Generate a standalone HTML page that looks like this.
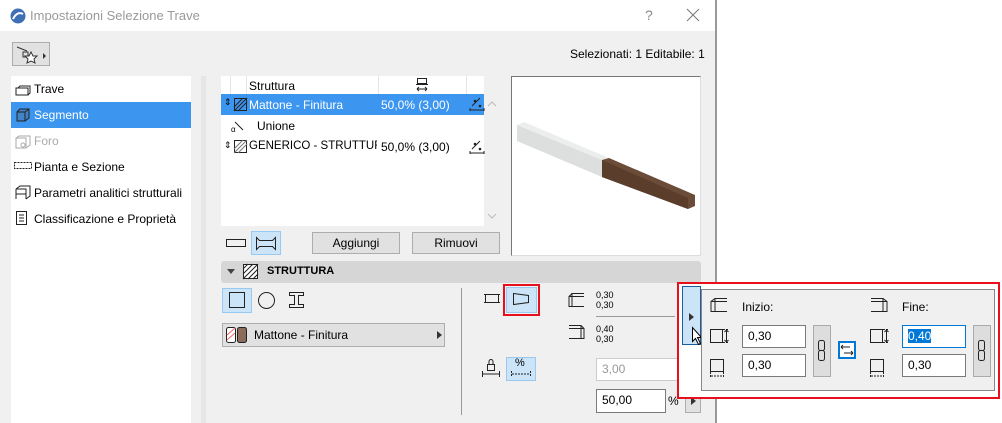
<!DOCTYPE html>
<html><head><meta charset="utf-8"><style>
*{box-sizing:border-box;margin:0;padding:0}
body{width:1002px;height:423px;background:#fff;font-family:"Liberation Sans",sans-serif;font-size:12px;color:#000;position:relative;overflow:hidden}
.a{position:absolute}
.dlg{left:0;top:0;width:717px;height:423px;background:#f0f0f0;border-right:2px solid #999}
.title{left:0;top:0;width:715px;height:31px;background:#fff}
.it{position:absolute;left:34px;font-size:12px}
.btn{position:absolute;background:#e1e1e1;border:1px solid #adadad;text-align:center;line-height:20px}
.inp{position:absolute;background:#fff;border:1px solid #7a7a7a;padding-left:5px;line-height:20px;font-size:12px}
.sel{background:#cce4f7;border:1px solid #99c9ef}
svg{position:absolute;overflow:visible}
</style></head><body>
<div class="a dlg"></div>
<div class="a title"></div>
<svg style="left:10px;top:8px" width="16" height="16"><circle cx="8" cy="8" r="7.5" fill="#3f6fb5"/><path d="M3 11 Q7 3 13 6" stroke="#fff" stroke-width="2" fill="none"/></svg>
<div class="a" style="left:30px;top:8px;color:#999;font-size:13px">Impostazioni Selezione Trave</div>
<div class="a" style="left:645px;top:7px;color:#888;font-size:14px">?</div>
<svg style="left:687px;top:9px" width="12" height="12"><path d="M0 0L12 12M12 0L0 12" stroke="#777" stroke-width="1"/></svg>

<div class="btn" style="left:12px;top:42px;width:38px;height:24px"></div>
<svg style="left:17px;top:46px" width="30" height="18"><path d="M0 1L10 5M6 6h5v5h-5z" stroke="#333" fill="none"/><path d="M14 6l2 4h4l-3 3 1 4-4-2-4 2 1-4-3-3h4z" stroke="#333" fill="#fff"/><path d="M26 7l3 3-3 3z" fill="#333"/></svg>
<div class="a" style="left:570px;top:47px;font-size:12px">Selezionati: 1 Editabile: 1</div>

<!-- left panel -->
<div class="a" style="left:11px;top:76px;width:180px;height:347px;background:#fff"></div>
<div class="a" style="left:11px;top:102px;width:180px;height:26px;background:#3c96f0"></div>
<div class="a" style="left:201px;top:76px;width:5px;height:347px;background:#e6e6e6"></div>
<svg style="left:15px;top:84px" width="17" height="13"><path d="M1 4h12v7H1zM3 4l2-2h10v7l-2 2" stroke="#222" fill="none"/></svg>
<div class="it" style="top:82px">Trave</div>
<svg style="left:16px;top:108px" width="14" height="14"><path d="M1 4h8v9H1zM1 4l3-3h9v9l-4 3M9 4l4-3" stroke="#222" fill="#556" fill-opacity=".3"/></svg>
<div class="it" style="top:108px;color:#fff">Segmento</div>
<svg style="left:15px;top:135px" width="17" height="14"><path d="M1 3h10v10H1zM1 3l3-2h11v9l-4 3" stroke="#aaa" fill="none"/><circle cx="8" cy="10" r="2" stroke="#aaa" fill="none"/></svg>
<div class="it" style="top:134px;color:#aaa">Foro</div>
<svg style="left:14px;top:162px" width="18" height="8"><rect x="0.5" y="0.5" width="17" height="6" stroke="#222" fill="none" stroke-dasharray="2 1"/></svg>
<div class="it" style="top:160px">Pianta e Sezione</div>
<svg style="left:15px;top:185px" width="16" height="15"><path d="M1 4h10v10M1 4v10M1 4l4-3h10v10l-4 3M1 9h10" stroke="#222" fill="none"/></svg>
<div class="it" style="top:186px">Parametri analitici strutturali</div>
<svg style="left:16px;top:211px" width="12" height="15"><path d="M.5 .5h10v13H.5zM3 4h5M3 7h5M3 10h5" stroke="#222" fill="none"/></svg>
<div class="it" style="top:212px">Classificazione e Proprietà</div>

<!-- table -->
<div class="a" style="left:221px;top:76px;width:263px;height:150px;background:#fff"></div>
<div class="a" style="left:230px;top:76px;width:1px;height:18px;background:#e5e5e5"></div>
<div class="a" style="left:246px;top:76px;width:1px;height:18px;background:#e5e5e5"></div>
<div class="a" style="left:378px;top:76px;width:1px;height:18px;background:#e5e5e5"></div>
<div class="a" style="left:466px;top:76px;width:1px;height:18px;background:#e5e5e5"></div>
<div class="a" style="left:249px;top:79px">Struttura</div>
<svg style="left:416px;top:78px" width="12" height="14"><path d="M1.5 .5h9v5h-9zM0 6.5h12M1 11h10M1 11l2-2M1 11l2 2M11 11l-2-2M11 11l-2 2" stroke="#222" fill="none"/></svg>
<div class="a" style="left:221px;top:94px;width:263px;height:21px;background:#3c96f0"></div>
<div class="a" style="left:224px;top:97px;font-size:9px">⇕</div>
<svg style="left:234px;top:98px" width="13" height="13"><rect x=".5" y=".5" width="12" height="12" stroke="#222" fill="none"/><path d="M0 9l9-9M0 13l13-13M4 13l9-9" stroke="#222"/></svg>
<div class="a" style="left:249px;top:98px;color:#fff">Mattone - Finitura</div>
<div class="a" style="left:381px;top:98px;color:#fff">50,0% (3,00)</div>
<svg style="left:470px;top:97px" width="14" height="14"><path d="M2 9l8-8M0 13h14M0 11v3M14 11v3" stroke="#222"/><circle cx="5" cy="4" r="1.3" fill="#222"/><circle cx="10" cy="9" r="1.3" fill="#222"/></svg>
<svg style="left:231px;top:122px" width="12" height="10"><path d="M4 0l8 8" stroke="#222"/><text x="0" y="10" font-size="8" font-family="Liberation Sans">α</text></svg>
<div class="a" style="left:257px;top:119px">Unione</div>
<div class="a" style="left:224px;top:140px;font-size:9px">⇕</div>
<svg style="left:234px;top:140px" width="13" height="13"><rect x=".5" y=".5" width="12" height="12" stroke="#222" fill="none"/><path d="M0 9l9-9M0 13l13-13M4 13l9-9" stroke="#777"/></svg>
<div class="a" style="left:249px;top:140px;width:128px;white-space:nowrap;overflow:hidden;font-size:11.5px">GENERICO - STRUTTUR...</div>
<div class="a" style="left:381px;top:140px">50,0% (3,00)</div>
<svg style="left:470px;top:140px" width="14" height="14"><path d="M2 9l8-8M0 13h14M0 11v3M14 11v3" stroke="#222"/><circle cx="5" cy="4" r="1.3" fill="#222"/><circle cx="10" cy="9" r="1.3" fill="#222"/></svg>
<svg style="left:488px;top:101px" width="8" height="120"><path d="M0 5l4-4 4 4M0 113l4 4 4-4" stroke="#bbb" fill="none"/></svg>

<!-- preview -->
<div class="a" style="left:511px;top:76px;width:190px;height:180px;background:#fff;border:1px solid #ddd;border-top-color:#777;border-left-color:#777"></div>
<svg style="left:516px;top:120px" width="185" height="95"><polygon points="1,5 8,2 93,38 86,40" fill="#eceeee"/><polygon points="1,5 86,40 86,57 1,21" fill="#dcdfde"/><polygon points="86,40 93,38 179,75 179,86 172,89 86,57" fill="#6b4c38"/><polygon points="86,40 172,78 172,89 86,57" fill="#5a3d2b"/></svg>

<!-- buttons row -->
<svg style="left:226px;top:239px" width="20" height="9"><rect x=".5" y=".5" width="19" height="7" stroke="#222" fill="none"/></svg>
<div class="a sel" style="left:251px;top:231px;width:30px;height:24px"></div>
<svg style="left:256px;top:237px" width="20" height="13"><path d="M.5 .5l3 3h13l3-3v12l-3-3h-13l-3 3z" stroke="#222" fill="none"/></svg>
<div class="btn" style="left:312px;top:232px;width:88px;height:22px">Aggiungi</div>
<div class="btn" style="left:412px;top:232px;width:88px;height:22px">Rimuovi</div>

<!-- STRUTTURA -->
<div class="a" style="left:221px;top:261px;width:480px;height:22px;background:#d6d6d6;border-radius:3px"></div>
<svg style="left:227px;top:269px" width="8" height="5"><path d="M0 0h8l-4 5z" fill="#444"/></svg>
<svg style="left:243px;top:264px" width="15" height="15"><rect x=".5" y=".5" width="14" height="14" stroke="#222" fill="#fff"/><path d="M0 10l10-10M0 15l15-15M5 15l10-10M0 5l5-5M10 15l5-5" stroke="#222"/></svg>
<div class="a" style="left:267px;top:265px;font-weight:bold;font-size:11px">STRUTTURA</div>

<div class="a sel" style="left:222px;top:288px;width:30px;height:25px"></div>
<svg style="left:229px;top:292px" width="16" height="16"><rect x=".5" y=".5" width="15" height="15" stroke="#222" fill="none"/></svg>
<svg style="left:258px;top:292px" width="17" height="17"><circle cx="8.5" cy="8.5" r="8" stroke="#222" fill="none"/></svg>
<svg style="left:289px;top:292px" width="15" height="16"><path d="M.5 .5h14v3h-5v9h5v3h-14v-3h5v-9h-5z" stroke="#222" fill="none"/></svg>
<div class="btn" style="left:222px;top:323px;width:223px;height:24px;text-align:left;padding-left:31px;line-height:22px">Mattone - Finitura</div>
<svg style="left:226px;top:327px" width="22" height="16"><rect x=".5" y=".5" width="9" height="15" stroke="#222" fill="#fff" rx="2"/><path d="M1 8l8-7M1 13l8-7" stroke="#e66"/><rect x="11.5" y=".5" width="9" height="15" stroke="#222" fill="#8b6b5a" rx="2"/></svg>
<svg style="left:437px;top:331px" width="5" height="8"><path d="M0 0l5 4-5 4z" fill="#333"/></svg>
<div class="a" style="left:461px;top:288px;width:1px;height:127px;background:#999"></div>

<svg style="left:484px;top:294px" width="16" height="10"><rect x="1.5" y=".5" width="13" height="8" stroke="#222" fill="none"/><path d="M0 .5h1M0 8.5h1M15 .5h1M15 8.5h1" stroke="#222"/></svg>
<div class="a" style="left:503px;top:284px;width:37px;height:32px;border:2px solid #e8101c"></div>
<div class="a sel" style="left:506px;top:287px;width:31px;height:26px"></div>
<svg style="left:513px;top:293px" width="17" height="12"><path d="M.5 .5l15 2v7l-15 2z" stroke="#222" fill="none"/><path d="M0 .5h1M0 11.5h1" stroke="#222"/></svg>

<svg style="left:568px;top:293px" width="17" height="15"><path d="M16 .5h-12l-3 3v10h15M1 3.5h15M4 .5v13" stroke="#222" fill="none"/></svg>
<div class="a" style="left:596px;top:290px;font-size:9px;line-height:10px">0,30<br>0,30</div>
<div class="a" style="left:596px;top:316px;width:79px;height:1px;background:#999"></div>
<svg style="left:568px;top:325px" width="17" height="15"><path d="M1 .5h12l3 3v10h-15M1 3.5h15M13 .5v13" stroke="#222" fill="none"/></svg>
<div class="a" style="left:596px;top:324px;font-size:9px;line-height:10px">0,40<br>0,30</div>

<svg style="left:482px;top:357px" width="18" height="22"><rect x="5.5" y="7.5" width="7" height="6" stroke="#222" fill="none"/><path d="M7 7.5v-3a2 2 0 0 1 4 0v3M.5 14v6M17.5 14v6M1 17h16" stroke="#222" fill="none"/></svg>
<div class="a sel" style="left:506px;top:357px;width:30px;height:24px"></div>
<div class="a" style="left:515px;top:357px;font-size:11px">%</div>
<svg style="left:511px;top:371px" width="20" height="6"><path d="M.5 0v6M19.5 0v6M1 3h18" stroke="#222" stroke-dasharray="2 1"/></svg>
<div class="inp" style="left:596px;top:358px;width:90px;height:23px;color:#999;border-color:#ccc">3,00</div>
<div class="inp" style="left:596px;top:389px;width:70px;height:24px">50,00</div>
<div class="a" style="left:668px;top:394px">%</div>
<div class="btn" style="left:685px;top:389px;width:16px;height:24px"></div>
<svg style="left:691px;top:397px" width="5" height="8"><path d="M0 0l5 4-5 4z" fill="#333"/></svg>

<!-- popup -->
<div class="a" style="left:677px;top:282px;width:323px;height:117px;border:2px solid #e8101c;background:#fff"></div>
<div class="a" style="left:682px;top:286px;width:19px;height:59px;background:#cce4f7;border:1px solid #1c5c9c"></div>
<svg style="left:689px;top:313px" width="5" height="8"><path d="M0 0l5 4-5 4z" fill="#333"/></svg>
<svg style="left:692px;top:327px" width="12" height="18"><path d="M.5 .5v14l3-3 3 6 2-1-3-6h4z" stroke="#000" fill="#fff"/></svg>
<div class="a" style="left:701px;top:289px;width:294px;height:102px;background:#f0f0f0;border:1px solid #888"></div>
<svg style="left:710px;top:298px" width="18" height="15"><path d="M17 .5h-12l-4 3v10h16M1 3.5h16M5 .5v13" stroke="#222" fill="none"/></svg>
<div class="a" style="left:742px;top:300px">Inizio:</div>
<svg style="left:870px;top:298px" width="18" height="15"><path d="M1 .5h12l4 3v10h-16M1 3.5h16M13 .5v13" stroke="#222" fill="none"/></svg>
<div class="a" style="left:902px;top:300px">Fine:</div>

<svg style="left:710px;top:329px" width="20" height="15"><rect x=".5" y=".5" width="12" height="13" stroke="#222" fill="none"/><path d="M13 .5h6M13 13.5h6" stroke="#222" stroke-dasharray="2 1"/><path d="M16.5 1v12M14.5 3l2-2 2 2M14.5 11l2 2 2-2" stroke="#222" fill="none"/></svg>
<svg style="left:710px;top:359px" width="15" height="19"><rect x=".5" y=".5" width="13" height="12" stroke="#222" fill="none"/><path d="M.5 13v5M13.5 13v5M1 17h12" stroke="#222" stroke-dasharray="2 1"/></svg>
<svg style="left:870px;top:329px" width="20" height="15"><rect x=".5" y=".5" width="12" height="13" stroke="#222" fill="none"/><path d="M13 .5h6M13 13.5h6" stroke="#222" stroke-dasharray="2 1"/><path d="M16.5 1v12M14.5 3l2-2 2 2M14.5 11l2 2 2-2" stroke="#222" fill="none"/></svg>
<svg style="left:870px;top:359px" width="15" height="19"><rect x=".5" y=".5" width="13" height="12" stroke="#222" fill="none"/><path d="M.5 13v5M13.5 13v5M1 17h12" stroke="#222" stroke-dasharray="2 1"/></svg>

<div class="inp" style="left:742px;top:325px;width:64px;height:23px">0,30</div>
<div class="inp" style="left:742px;top:354px;width:64px;height:23px">0,30</div>
<div class="inp" style="left:902px;top:325px;width:64px;height:23px;border-color:#0078d7"><span style="background:#0078d7;color:#fff">0,40</span></div>
<div class="inp" style="left:902px;top:354px;width:64px;height:23px">0,30</div>
<div class="btn" style="left:813px;top:325px;width:18px;height:52px;background:#ddd;border-color:#aaa"></div>
<svg style="left:818px;top:340px" width="8" height="22"><rect x=".5" y=".5" width="6" height="10" rx="2" stroke="#222" fill="none"/><rect x=".5" y="10.5" width="6" height="10" rx="2" stroke="#222" fill="none"/></svg>
<div class="btn" style="left:973px;top:325px;width:18px;height:52px;background:#ddd;border-color:#aaa"></div>
<svg style="left:978px;top:340px" width="8" height="22"><rect x=".5" y=".5" width="6" height="10" rx="2" stroke="#222" fill="none"/><rect x=".5" y="10.5" width="6" height="10" rx="2" stroke="#222" fill="none"/></svg>
<div class="a" style="left:838px;top:341px;width:18px;height:18px;border:2px solid #0078d7;background:#fff"></div>
<svg style="left:841px;top:345px" width="12" height="10"><path d="M0 2h9M0 2l2-2M0 2l2 2M3 8h9M12 8l-2-2M12 8l-2 2" stroke="#222" fill="none"/></svg>
</body></html>
